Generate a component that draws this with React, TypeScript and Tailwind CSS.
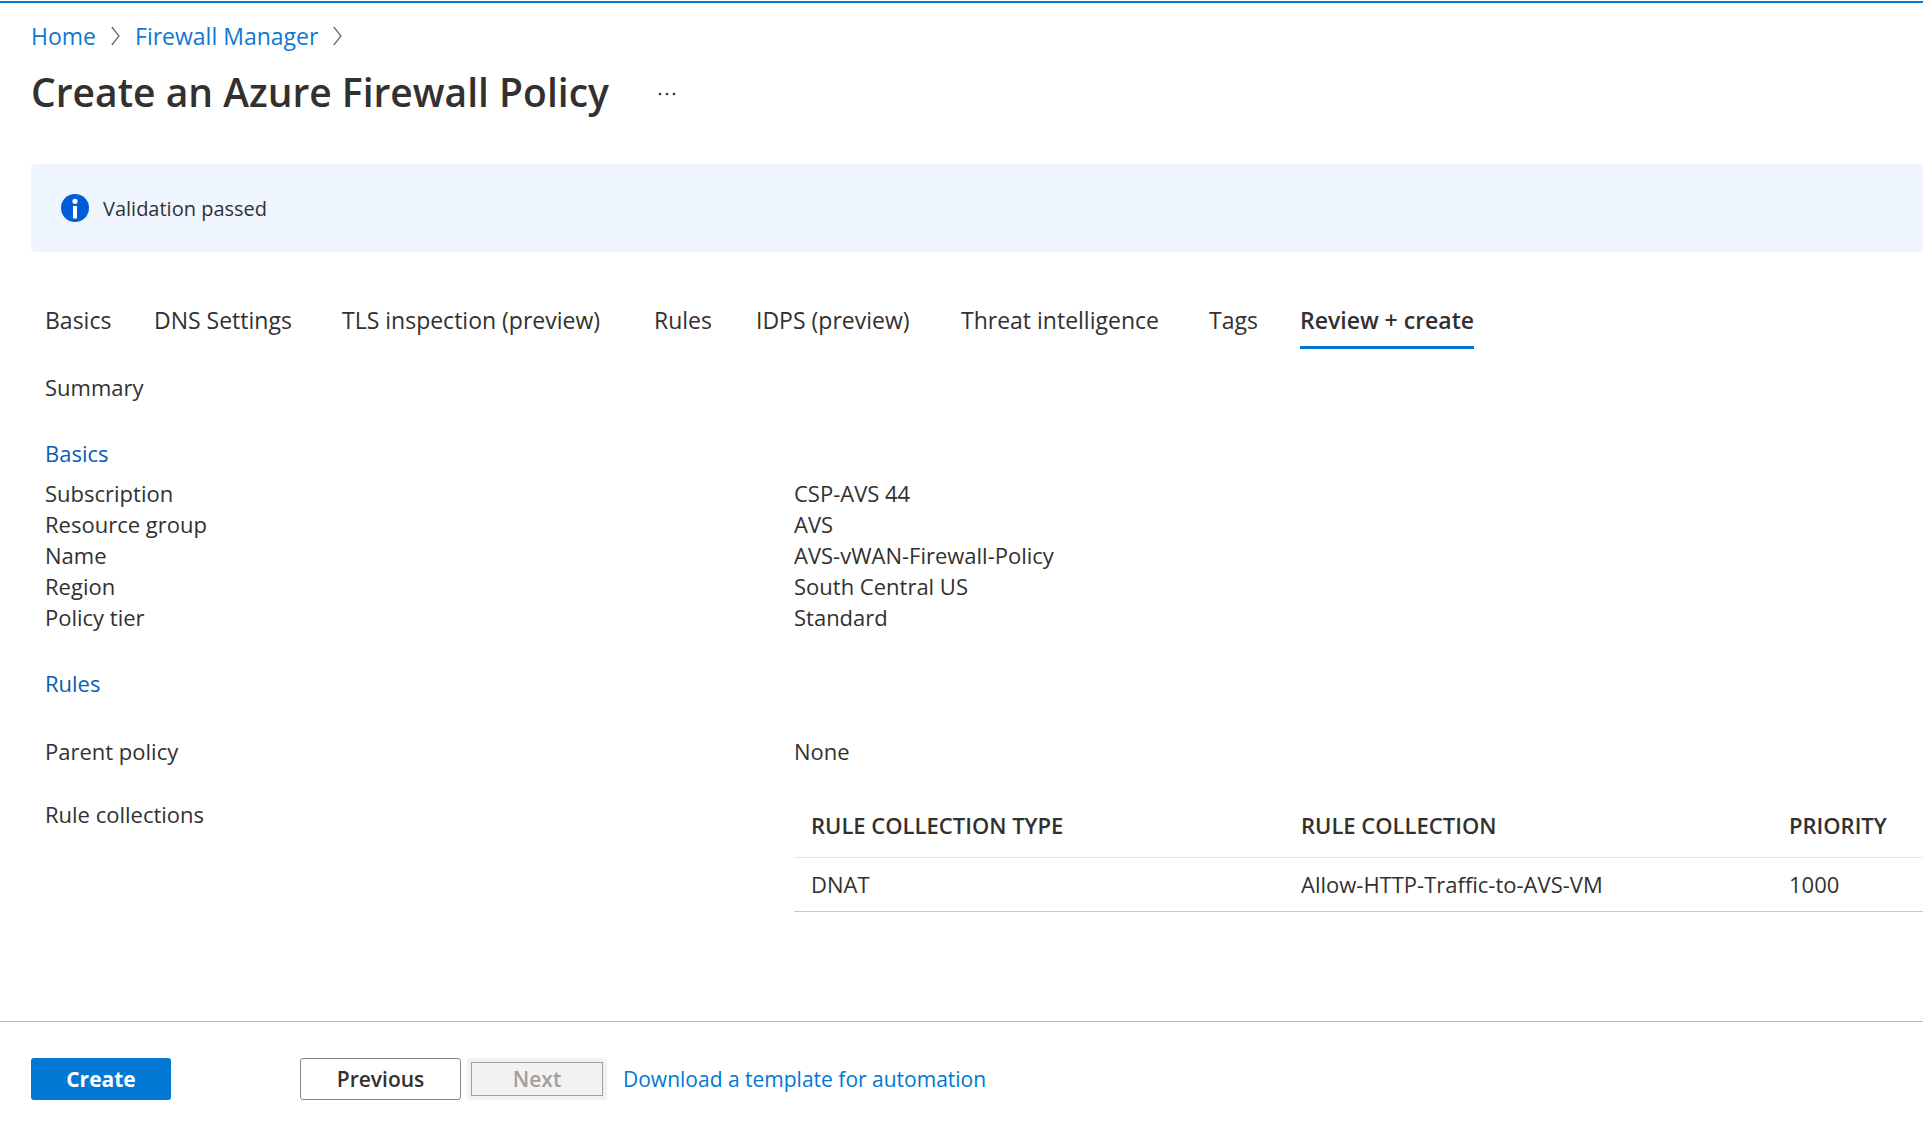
import React from "react";

const tabs = [
  { label: "Basics", width: "w-[109px]" },
  { label: "DNS Settings", width: "w-[188px]" },
  { label: "TLS inspection (preview)", width: "w-[312px]" },
  { label: "Rules", width: "w-[102px]" },
  { label: "IDPS (preview)", width: "w-[205px]" },
  { label: "Threat intelligence", width: "w-[248px]" },
  { label: "Tags", width: "w-[91px]" },
];

const basics = [
  ["Subscription", "CSP-AVS 44"],
  ["Resource group", "AVS"],
  ["Name", "AVS-vWAN-Firewall-Policy"],
  ["Region", "South Central US"],
  ["Policy tier", "Standard"],
];

function Chevron() {
  return (
    <svg className="h-[20px] w-[9px]" viewBox="0 0 9 20" fill="none" stroke="#6b6b6b" strokeWidth="1.3" aria-hidden="true">
      <path d="M0.8 1 L8 10 L0.8 19" />
    </svg>
  );
}

function InfoIcon() {
  return (
    <svg className="size-7 shrink-0" viewBox="0 0 28 28" aria-hidden="true">
      <circle cx="14" cy="14" r="14" fill="#015cda" />
      <circle cx="14" cy="7.3" r="2.6" fill="#fff" />
      <rect x="12" y="12" width="4" height="12.5" fill="#fff" />
    </svg>
  );
}

export default function App() {
  return (
    <div className="flex min-h-screen flex-col overflow-x-hidden bg-white pt-px font-['Open_Sans','Noto_Sans',sans-serif] text-[22px] leading-[31px] text-[#323130]">
      <header className="border-t-2 border-[#0078d4] pl-[31px]">
        <nav aria-label="Breadcrumb" className="flex items-center gap-[15px] pt-[17px] text-[23px] leading-8 text-[#0f78d4]">
          <a href="#home">Home</a>
          <Chevron />
          <a href="#firewall-manager">Firewall Manager</a>
          <Chevron />
        </nav>
        <div className="flex items-center gap-12 pt-3">
          <h1 className="text-[39px] leading-[56px] font-semibold">Create an Azure Firewall Policy</h1>
          <button type="button" aria-label="More options" className="pt-4 pb-3">
            <svg className="h-1 w-5" viewBox="0 0 20 4" fill="#323130" aria-hidden="true">
              <circle cx="3" cy="2" r="1.3" />
              <circle cx="10" cy="2" r="1.3" />
              <circle cx="17" cy="2" r="1.3" />
            </svg>
          </button>
        </div>
      </header>

      <div role="status" className="mt-11 ml-[31px] flex h-[88px] items-center gap-[14px] rounded-l-sm bg-[#eff6ff] pl-[30px] text-[20px]">
        <InfoIcon />
        <span>Validation passed</span>
      </div>

      <main className="grow pl-[45px]">
        <div role="tablist" className="mt-[49px] flex text-[23px] leading-[38px] whitespace-nowrap">
          {tabs.map((t) => (
            <button key={t.label} type="button" role="tab" aria-selected="false" className={`shrink-0 pb-[10px] text-left ${t.width}`}>
              {t.label}
            </button>
          ))}
          <button type="button" role="tab" aria-selected="true" className="shrink-0 border-b-3 border-[#0078d4] pb-[7px] font-semibold">
            Review + create
          </button>
        </div>

        <p className="mt-[23px]">Summary</p>

        <section>
          <h2 className="mt-[35px] text-[#0b5cb5]">Basics</h2>
          <dl className="mt-[9px]">
            {basics.map(([k, v]) => (
              <div key={k} className="flex">
                <dt className="w-[749px] shrink-0">{k}</dt>
                <dd>{v}</dd>
              </div>
            ))}
          </dl>
        </section>

        <section>
          <h2 className="mt-[35px] text-[#0b5cb5]">Rules</h2>
          <dl>
            <div className="mt-[37px] flex">
              <dt className="w-[749px] shrink-0">Parent policy</dt>
              <dd>None</dd>
            </div>
            <div className="mt-8 flex items-start">
              <dt className="w-[749px] shrink-0">Rule collections</dt>
              <dd className="min-w-0 grow">
                <table className="w-full text-left whitespace-nowrap">
                  <thead>
                    <tr className="border-b border-[#e6e6e6]">
                      <th className="w-[490px] pt-[11px] pb-4 pl-[17px] font-semibold">RULE COLLECTION TYPE</th>
                      <th className="w-[488px] pt-[11px] pb-4 pl-[17px] font-semibold">RULE COLLECTION</th>
                      <th className="pt-[11px] pb-4 pl-[17px] font-semibold">PRIORITY</th>
                    </tr>
                  </thead>
                  <tbody>
                    <tr className="border-b border-[#c8c8c8]">
                      <td className="pt-[11px] pb-[11px] pl-[17px]">DNAT</td>
                      <td className="pt-[11px] pb-[11px] pl-[17px]">Allow-HTTP-Traffic-to-AVS-VM</td>
                      <td className="pt-[11px] pb-[11px] pl-[17px]">1000</td>
                    </tr>
                  </tbody>
                </table>
              </dd>
            </div>
          </dl>
        </section>
      </main>

      <footer className="flex items-center border-t border-[#b8b8b8] pt-9 pb-[30px] pl-[31px] text-[21px]">
        <button type="button" className="h-[42px] w-[140px] rounded-[3px] bg-[#0078d4] font-bold text-white">
          Create
        </button>
        <button type="button" className="ml-[129px] h-[42px] w-[161px] rounded-[3px] border border-[#8a8886] bg-white font-semibold">
          Previous
        </button>
        <button type="button" disabled className="ml-[6px] h-[42px] w-[140px] rounded-[3px] bg-[#f3f2f1] p-1 font-semibold text-[#a19f9d]">
          <span className="flex h-full items-center justify-center border border-[#a19f9d]">Next</span>
        </button>
        <a href="#template" className="ml-4 text-[#0078d4]">
          Download a template for automation
        </a>
      </footer>
    </div>
  );
}
